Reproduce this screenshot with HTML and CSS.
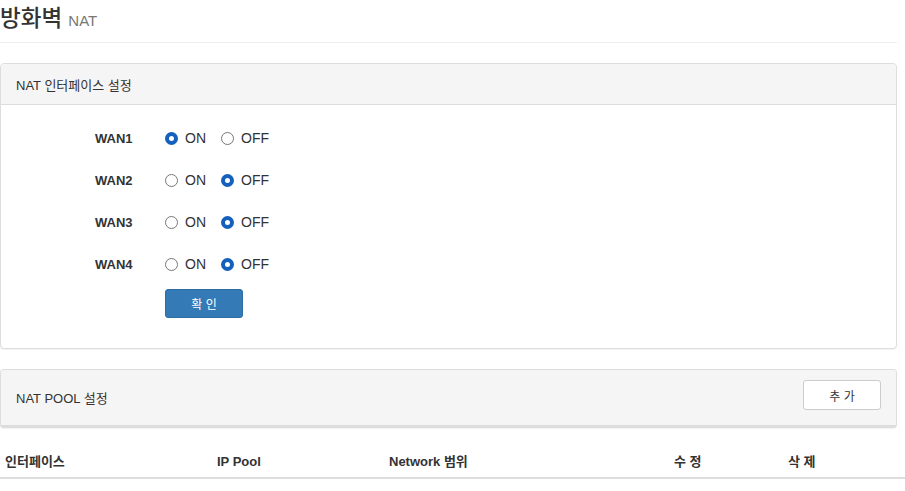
FILE: index.html
```html
<!DOCTYPE html>
<html lang="ko">
<head>
<meta charset="utf-8">
<link rel="stylesheet" href="styles.css">
</head>
<body>
<div class="page">
  <h1 class="title">방화벽 <small>NAT</small></h1>
  <div class="panel">
    <div class="panel-heading">NAT 인터페이스 설정</div>
    <div class="panel-body">
      <div class="row"><span class="label">WAN1</span><span class="radio on"></span><span class="opt">ON</span><span class="radio"></span><span class="opt">OFF</span></div>
      <div class="row"><span class="label">WAN2</span><span class="radio"></span><span class="opt">ON</span><span class="radio on"></span><span class="opt">OFF</span></div>
      <div class="row"><span class="label">WAN3</span><span class="radio"></span><span class="opt">ON</span><span class="radio on"></span><span class="opt">OFF</span></div>
      <div class="row"><span class="label">WAN4</span><span class="radio"></span><span class="opt">ON</span><span class="radio on"></span><span class="opt">OFF</span></div>
      <div class="btn-row"><button class="btn-primary">확 인</button></div>
    </div>
  </div>
  <div class="panel panel2">
    <div class="panel-heading heading2"><span class="h2text">NAT POOL 설정</span><button class="btn-default">추 가</button></div>
  </div>
  <div class="table-head">
    <span class="c1">인터페이스</span>
    <span class="c2">IP Pool</span>
    <span class="c3">Network 범위</span>
    <span class="c4">수 정</span>
    <span class="c5">삭 제</span>
  </div>
</div>
</body>
</html>
```
FILE: styles.css
```css
* { box-sizing: border-box; }
html, body { margin: 0; padding: 0; background: #fff; }
body {
  font-family: "Liberation Sans", "Noto Sans CJK KR", Arial, sans-serif;
  color: #333;
  font-size: 14px;
}
.page { width: 897px; }
.title {
  margin: 0;
  padding: 4px 0 0 0;
  height: 43px;
  font-size: 22.5px;
  font-weight: 500;
  color: #333;
  line-height: 30px;
  border-bottom: 1px solid #eee;
}
.title small {
  font-size: 15px;
  color: #777;
  font-weight: 400;
}
.panel {
  margin-top: 20px;
  border: 1px solid #ddd;
  border-radius: 4px;
  box-shadow: 0 1px 1px rgba(0,0,0,0.05);
  background: #fff;
}
.panel-heading {
  background: #f5f5f5;
  border-bottom: 1px solid #ddd;
  border-radius: 3px 3px 0 0;
  height: 41px;
  padding: 0 15px;
  display: flex;
  align-items: center;
  font-size: 13px;
  color: #333;
}
.panel-body {
  padding: 12px 0 30px 0;
}
.row {
  display: flex;
  align-items: center;
  height: 42px;
  font-size: 14px;
}
.label {
  width: 164px;
  padding-left: 94px;
  font-weight: bold;
  font-size: 13px;
  color: #333;
}
.radio {
  width: 13px;
  height: 13px;
  border-radius: 50%;
  border: 1px solid #777;
  background: #fff;
  display: inline-block;
}
.radio.on {
  border: 4px solid #1560bd;
  background: #fff;
}
.opt {
  margin-left: 7px;
  margin-right: 15px;
  color: #333;
}
.btn-row { padding-left: 164px; margin-top: 4px; }
.btn-primary {
  display: block;
  width: 78px;
  height: 29px;
  background: #337ab7;
  border: 1px solid #2e6da4;
  border-radius: 3px;
  color: #fff;
  font-family: inherit;
  font-size: 12px;
}
.panel2 { margin-top: 20px; border-bottom: 3px solid #ddd; }
.heading2 {
  height: 55px;
  border-bottom: none;
  justify-content: space-between;
  padding: 0 15px 0 15px;
  border-radius: 3px 3px 0 0;
}
.h2text { font-size: 13px; }
.btn-default {
  align-self: flex-start;
  margin-top: 10px;
  width: 78px;
  height: 30px;
  background: #fff;
  border: 1px solid #ccc;
  border-radius: 3px;
  font-family: inherit;
  font-size: 12px;
  color: #333;
}
.table-head {
  margin-top: 25px;
  display: flex;
  line-height: 18px;
  border-bottom: 2px solid #ddd;
  font-weight: bold;
  font-size: 13px;
  padding: 0 0 6px 5px;
  width: 905px;
}
.table-head span { display: block; }
.c1 { width: 212px; }
.c2 { width: 172px; }
.c3 { width: 285px; }
.c4 { width: 114px; }
```
